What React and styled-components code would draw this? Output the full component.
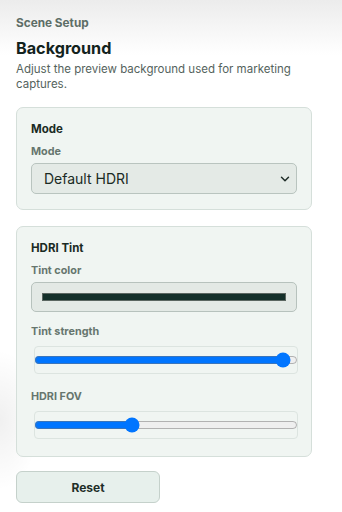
import styled, { createGlobalStyle } from "styled-components";
import { useState } from "react";
import { ChevronDown } from "lucide-react";

const GlobalStyle = createGlobalStyle`
  html, body {
    margin: 0;
    padding: 0;
  }
  body {
    font-family: Inter, "Noto Sans", sans-serif;
    color: #13231d;
    min-height: 512px;
    background:
      radial-gradient(ellipse 40px 70px at 0 420px, rgba(0, 0, 0, 0.06), transparent),
      linear-gradient(to bottom, #ececec 0, #ffffff 55px);
  }
`;

const Page = styled.div`
  width: 296px;
  padding: 16px 30px 9px 16px;
  display: flex;
  flex-direction: column;
`;

const Eyebrow = styled.div`
  font-size: 11.8px;
  font-weight: 700;
  color: #5e6e67;
  line-height: 14px;
`;

const Title = styled.h1`
  margin: 7px 0 0;
  font-size: 16.2px;
  font-weight: 700;
  line-height: 22px;
  color: #13231d;
`;

const Description = styled.p`
  margin: 3px 0 0;
  font-size: 11.5px;
  line-height: 14.6px;
  color: #55635d;
`;

const Card = styled.section`
  margin-top: 16px;
  background: #f0f5f2;
  border: 1px solid #d5dfda;
  border-radius: 7px;
  padding: 14px 14px ${(p) => p.$bottom || 15}px;
  display: flex;
  flex-direction: column;
`;

const CardTitle = styled.h2`
  margin: 0;
  font-size: 11.5px;
  font-weight: 700;
  line-height: 14px;
  color: #1a2a24;
`;

const Label = styled.label`
  margin-top: ${(p) => p.$top || 9}px;
  font-size: 10.8px;
  font-weight: 700;
  line-height: 13px;
  color: #66756e;
`;

const SelectWrap = styled.div`
  position: relative;
  margin-top: 5px;
`;

const Select = styled.select`
  appearance: none;
  width: 100%;
  height: 31px;
  padding: 0 28px 0 12px;
  font-family: Inter, "Noto Sans", sans-serif;
  font-size: 14px;
  color: #1a2a24;
  background: #e4eae6;
  border: 1px solid #b9c4bf;
  border-radius: 5px;
  outline: none;
`;

const Chevron = styled(ChevronDown)`
  position: absolute;
  right: 5px;
  top: 9px;
  pointer-events: none;
  color: #1f2d28;
`;

const ColorInput = styled.input`
  display: block;
  margin-top: 5px;
  width: 100%;
  height: 30px;
  box-sizing: border-box;
  padding: 10px;
  background: #e3e9e5;
  border: 1px solid #b7c2bd;
  border-radius: 5px;
  cursor: pointer;

  &::-webkit-color-swatch-wrapper {
    padding: 0;
  }
  &::-webkit-color-swatch {
    border: 1px solid #5b6661;
    border-radius: 0;
  }
`;

const RangeBox = styled.div`
  margin: 8px 0 0 3px;
  width: 264px;
  height: 28px;
  box-sizing: border-box;
  border: 1px solid #dce4e0;
  border-radius: 4px;
  display: flex;
  align-items: center;
`;

const Range = styled.input`
  flex: 1;
  margin: 0 -1px;
  min-width: 0;
`;

const ResetButton = styled.button`
  margin-top: 14px;
  width: 144px;
  height: 32px;
  background: #e7f0ec;
  border: 1px solid #c5d1cb;
  border-radius: 6px;
  font-family: Inter, "Noto Sans", sans-serif;
  font-size: 12px;
  font-weight: 700;
  color: #1e2e28;
  cursor: pointer;
`;

export default function App() {
  const [mode, setMode] = useState("default");
  const [tint, setTint] = useState("#14302a");
  const [strength, setStrength] = useState(97);
  const [fov, setFov] = useState(50);

  const reset = () => {
    setMode("default");
    setTint("#14302a");
    setStrength(97);
    setFov(50);
  };

  return (
    <>
      <GlobalStyle />
      <Page>
        <Eyebrow>Scene Setup</Eyebrow>
        <Title>Background</Title>
        <Description>
          Adjust the preview background used for marketing captures.
        </Description>

        <Card>
          <CardTitle>Mode</CardTitle>
          <Label>Mode</Label>
          <SelectWrap>
            <Select value={mode} onChange={(e) => setMode(e.target.value)}>
              <option value="default">Default HDRI</option>
              <option value="solid">Solid color</option>
              <option value="transparent">Transparent</option>
            </Select>
            <Chevron size={14} strokeWidth={2.5} />
          </SelectWrap>
        </Card>

        <Card $bottom={17}>
          <CardTitle>HDRI Tint</CardTitle>
          <Label>Tint color</Label>
          <ColorInput
            type="color"
            value={tint}
            onChange={(e) => setTint(e.target.value)}
          />
          <Label $top={13}>Tint strength</Label>
          <RangeBox>
            <Range
              type="range"
              min={0}
              max={100}
              value={strength}
              onChange={(e) => setStrength(Number(e.target.value))}
            />
          </RangeBox>
          <Label $top={16}>HDRI FOV</Label>
          <RangeBox>
            <Range
              type="range"
              min={10}
              max={120}
              value={fov}
              onChange={(e) => setFov(Number(e.target.value))}
            />
          </RangeBox>
        </Card>

        <ResetButton onClick={reset}>Reset</ResetButton>
      </Page>
    </>
  );
}
